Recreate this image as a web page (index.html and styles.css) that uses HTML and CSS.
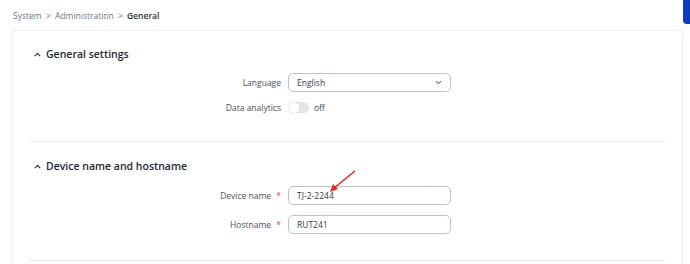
FILE: index.html
```html
<!DOCTYPE html>
<html lang="en">
<head>
    <meta charset="UTF-8">
    <meta name="viewport" content="width=device-width, initial-scale=1.0">
    <title>General</title>
    <link rel="stylesheet" href="styles.css">
</head>
<body>

<!-- Top bar with breadcrumb -->
<div class="topbar">
    <div class="breadcrumb">
        <span>System</span>
        <span class="sep">&gt;</span>
        <span>Administration</span>
        <span class="sep">&gt;</span>
        <span class="current">General</span>
    </div>
    <div class="top-btn"></div>
</div>

<!-- Settings card -->
<div class="card">
    <div class="section">
        <div class="section-title">
            <svg class="chevron" width="7" height="5" viewBox="0 0 7 5"><path d="M0.8 4.2 L3.5 1.4 L6.2 4.2" fill="none" stroke="#2b3445" stroke-width="1.2"/></svg>
            General settings
        </div>
        <div class="rows first">
            <div class="row">
                <label class="label">Language</label>
                <div class="field select">
                    <span>English</span>
                    <svg width="7" height="5" viewBox="0 0 7 5"><path d="M1 1.2 L3.5 3.6 L6 1.2" fill="none" stroke="#6a7283" stroke-width="1.1"/></svg>
                </div>
            </div>
            <div class="row">
                <label class="label">Data analytics</label>
                <div class="switch-wrap">
                    <span class="switch"><span class="knob"></span></span>
                    <span class="switch-text">off</span>
                </div>
            </div>
        </div>
    </div>

    <div class="section second">
        <div class="section-title">
            <svg class="chevron" width="7" height="5" viewBox="0 0 7 5"><path d="M0.8 4.2 L3.5 1.4 L6.2 4.2" fill="none" stroke="#2b3445" stroke-width="1.2"/></svg>
            Device name and hostname
        </div>
        <div class="rows">
            <div class="row">
                <label class="label">Device name <span class="req">*</span></label>
                <div class="field">TJ-2-2244</div>
            </div>
            <div class="row">
                <label class="label">Hostname <span class="req">*</span></label>
                <div class="field">RUT241</div>
            </div>
        </div>
    </div>
</div>

<!-- Annotation arrow -->
<svg class="arrow" width="40" height="40" viewBox="0 0 40 40">
    <line x1="33" y1="2" x2="12" y2="19" stroke="#e52b21" stroke-width="1.6"/>
    <polygon points="8,23 11,15 16,20" fill="#e52b21"/>
</svg>

</body>
</html>
```

FILE: styles.css
```css
body {
    margin: 0;
    font-family: "Open Sans", "Noto Sans", sans-serif;
    background-color: #ffffff;
    color: #3c4250;
    overflow: hidden;
}

/* Top bar */
.topbar {
    display: flex;
    height: 30px;
}

.breadcrumb {
    flex: 1;
    padding: 10px 0 0 13px;
    font-size: 8.5px;
    color: #6d7585;
    line-height: 12px;
}

.breadcrumb .sep {
    margin: 0 2px;
    color: #6d7585;
}

.breadcrumb .current {
    color: #2a3344;
    font-weight: 600;
}

/* Edge of the header button, cut off by the window */
.top-btn {
    flex: 0 0 7px;
    height: 24px;
    background: #0b3cc0;
    border-radius: 0 0 0 4px;
}

/* Card */
.card {
    margin-left: 11px;
    width: 636px;
    padding: 0 17px;
    border: 1px solid #eceef2;
    border-bottom: none;
    border-radius: 4px 4px 0 0;
    height: 233px;
}

.section {
    padding: 15px 0 24px;
    border-bottom: 1px solid #e9ecf1;
}

.section.second {
    padding: 16px 0 26px;
}

.section-title {
    display: flex;
    align-items: center;
    height: 16px;
    padding-left: 5px;
    font-size: 10.5px;
    font-weight: 600;
    color: #1e2736;
}

.chevron {
    margin-right: 5px;
}

/* Form rows */
.rows {
    display: flex;
    flex-direction: column;
    gap: 10px;
    margin-top: 12px;
}

.rows.first {
    margin-top: 11px;
    gap: 6px;
}

.row {
    display: flex;
    align-items: center;
    height: 19px;
}

.label {
    width: 252px;
    text-align: right;
    padding-right: 7px;
    font-size: 8.5px;
    color: #4a5060;
}

.req {
    color: #e0453a;
    margin-left: 3px;
}

.field {
    box-sizing: border-box;
    width: 163px;
    height: 19px;
    border: 1px solid #bcc2ce;
    border-radius: 5px;
    padding: 0 8px;
    font-size: 8.5px;
    line-height: 17px;
    color: #333a48;
}

.select {
    display: flex;
    justify-content: space-between;
    align-items: center;
}

/* Toggle */
.switch-wrap {
    display: flex;
    align-items: center;
    padding-left: 1px;
}

.switch {
    position: relative;
    width: 20px;
    height: 11px;
    border-radius: 6px;
    background-color: #e2e5eb;
}

.switch .knob {
    position: absolute;
    left: 0;
    top: 0;
    width: 11px;
    height: 11px;
    border-radius: 50%;
    background-color: #ffffff;
    box-shadow: 0 0 1px rgba(0, 0, 0, 0.35);
}

.switch-text {
    margin-left: 5px;
    font-size: 8.5px;
    color: #3c4250;
}

/* Red annotation arrow */
.arrow {
    position: absolute;
    left: 322px;
    top: 169px;
}
```
